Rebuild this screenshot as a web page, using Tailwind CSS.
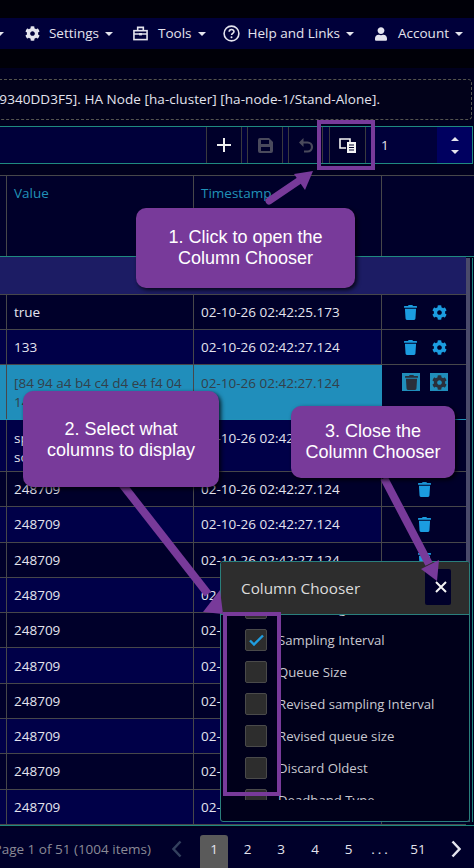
<!DOCTYPE html>
<html lang="en">
<head>
    <meta charset="UTF-8">
    <title>Column Chooser</title>
    <script src="https://cdn.jsdelivr.net/npm/@tailwindcss/browser@4"></script>
</head>
<body class="bg-black">
<svg class="hidden">
    <symbol id="gear" viewBox="0 0 512 512"><path fill="currentColor" d="M487.4 315.7l-42.6-24.6c4.3-23.2 4.3-47 0-70.2l42.6-24.6c4.9-2.8 7.1-8.6 5.5-14-11.1-35.6-30-67.8-54.7-94.6-3.8-4.1-10-5.1-14.8-2.3L380.8 110c-17.9-15.4-38.5-27.3-60.8-35.1V25.8c0-5.6-3.9-10.5-9.4-11.7-36.7-8.2-74.3-7.8-109.2 0-5.5 1.2-9.4 6.1-9.4 11.7V75c-22.2 7.9-42.8 19.8-60.8 35.1L88.7 85.5c-4.9-2.8-11-1.9-14.8 2.3-24.7 26.7-43.6 58.9-54.7 94.6-1.7 5.4.6 11.2 5.5 14L67.3 221c-4.3 23.2-4.3 47 0 70.2l-42.6 24.6c-4.9 2.8-7.1 8.6-5.5 14 11.1 35.6 30 67.8 54.7 94.6 3.8 4.1 10 5.1 14.8 2.3l42.6-24.6c17.9 15.4 38.5 27.3 60.8 35.1v49.2c0 5.6 3.9 10.5 9.4 11.7 36.7 8.2 74.3 7.8 109.2 0 5.5-1.2 9.4-6.1 9.4-11.7v-49.2c22.2-7.9 42.8-19.8 60.8-35.1l42.6 24.6c4.9 2.8 11 1.9 14.8-2.3 24.7-26.7 43.6-58.9 54.7-94.6 1.5-5.5-.7-11.3-5.6-14.1zM256 336c-44.1 0-80-35.9-80-80s35.9-80 80-80 80 35.9 80 80-35.9 80-80 80z"/></symbol>
    <symbol id="trash" viewBox="0 0 448 512"><path fill="currentColor" d="M432 32H312l-9.4-18.7A24 24 0 0 0 281.1 0H166.8a23.72 23.72 0 0 0-21.4 13.3L136 32H16A16 16 0 0 0 0 48v32a16 16 0 0 0 16 16h416a16 16 0 0 0 16-16V48a16 16 0 0 0-16-16zM53.2 467a48 48 0 0 0 47.9 45h245.8a48 48 0 0 0 47.9-45L416 128H32z"/></symbol>
</svg>
<div class="relative w-[474px] h-[868px] overflow-hidden bg-[#00001e] font-['Open_Sans',sans-serif] text-[13.5px] text-[#e4e4ee]">

    <!-- Top nav -->
    <div class="h-[18px] bg-[#000008]"></div>
    <div class="h-[31px] bg-[#00003a] flex items-center justify-end pr-[11px]">
        <span class="shrink-0 mr-[21px] w-0 h-0 border-x-[4px] border-x-transparent border-t-[4px] border-t-[#e4e4ee]"></span>
        <div class="flex items-center gap-[9px] mr-[20px] shrink-0">
            <svg class="w-[15px] h-[15px]"><use href="#gear"/></svg>
            <span class="flex items-center gap-[6px]">Settings <span class="w-0 h-0 border-x-[4px] border-x-transparent border-t-[4px] border-t-[#e4e4ee]"></span></span>
        </div>
        <div class="flex items-center gap-[10px] mr-[17px] shrink-0">
            <svg class="w-[15px] h-[15px]" viewBox="0 0 16 16" fill="none" stroke="#e4e4ee" stroke-width="1.7"><rect x="1" y="5" width="14" height="9.5"/><path d="M5 5V1.5h6V5M1 8.5h14"/><rect x="6.5" y="7.5" width="3" height="2.5" fill="#e4e4ee" stroke="none"/></svg>
            <span class="flex items-center gap-[6px]">Tools <span class="w-0 h-0 border-x-[4px] border-x-transparent border-t-[4px] border-t-[#e4e4ee]"></span></span>
        </div>
        <div class="flex items-center gap-[8px] mr-[21px] shrink-0">
            <svg class="w-[17px] h-[17px]" viewBox="0 0 17 17" fill="none" stroke="#e4e4ee"><circle cx="8.5" cy="8.5" r="7.4" stroke-width="1.6"/><path d="M6.2 6.8c0-3 4.8-3 4.8-.2 0 1.9-2.4 1.8-2.4 3.5" stroke-width="1.6"/><circle cx="8.5" cy="12.3" r="1" fill="#e4e4ee" stroke="none"/></svg>
            <span class="flex items-center gap-[6px]">Help and Links <span class="w-0 h-0 border-x-[4px] border-x-transparent border-t-[4px] border-t-[#e4e4ee]"></span></span>
        </div>
        <div class="flex items-center gap-[11px] shrink-0">
            <svg class="w-[12px] h-[14px]" viewBox="0 0 448 512" fill="#e4e4ee"><path d="M224 256c70.7 0 128-57.3 128-128S294.7 0 224 0 96 57.3 96 128s57.3 128 128 128zm89.6 32h-16.7c-22.2 10.2-46.9 16-72.9 16s-50.6-5.8-72.9-16h-16.7C60.2 288 0 348.2 0 422.4V464c0 26.5 21.5 48 48 48h352c26.5 0 48-21.5 48-48v-41.6c0-74.2-60.2-134.4-134.4-134.4z"/></svg>
            <span class="flex items-center gap-[6px]">Account <span class="w-0 h-0 border-x-[4px] border-x-transparent border-t-[4px] border-t-[#e4e4ee]"></span></span>
        </div>
    </div>
    <div class="h-[19px] bg-[#000008]"></div>

    <!-- Status message -->
    <div class="h-[11px]"></div>
    <div class="h-[41px] -ml-[10px] w-[482px] border border-dashed border-[#55554f] rounded-[4px] bg-[#02021a] flex items-center justify-end pr-[91px] whitespace-nowrap overflow-hidden tracking-[0.06px]">9340DD3F5]. HA Node [ha-cluster] [ha-node-1/Stand-Alone].</div>
    <div class="h-[6px]"></div>

    <!-- Toolbar -->
    <div class="h-[38px] w-[473px] border-y border-r border-[#1f8a80] bg-[#00003a] flex items-center justify-end">
        <div class="flex h-[36px] items-stretch">
            <div class="w-[36px] border-x border-[#3a3a3e] bg-[#00002a] flex items-center justify-center">
                <svg class="w-[16px] h-[16px]" viewBox="0 0 16 16"><path d="M8 1v14M1 8h14" stroke="#f0f0f0" stroke-width="2"/></svg>
            </div>
            <div class="w-[5px]"></div>
            <div class="w-[36px] border-x border-[#3a3a3e] bg-[#00002a] flex items-center justify-center">
                <svg class="w-[15px] h-[15px]" viewBox="0 0 15 15" fill="#4a4a5c"><path d="M2 0h9l4 4v9a2 2 0 0 1-2 2H2a2 2 0 0 1-2-2V2a2 2 0 0 1 2-2zM3 2v4h8V2zM3 9v4h9V9z" fill-rule="evenodd"/></svg>
            </div>
            <div class="w-[5px]"></div>
            <div class="w-[35px] border-x border-[#3a3a3e] bg-[#00002a] flex items-center justify-center">
                <svg class="w-[16px] h-[16px]" viewBox="0 0 16 16" fill="none"><path d="M4 5.5h5.5a4.5 4.5 0 0 1 0 9H6" stroke="#4a4a5c" stroke-width="2.2"/><path d="M1 5.5L5.5 1v9z" fill="#4a4a5c"/></svg>
            </div>
            <div class="w-[6px]"></div>
            <div class="w-[37px] border-x border-[#3a3a3e] bg-[#00002a] flex items-center justify-center">
                <svg class="w-[17px] h-[15px]" viewBox="0 0 17 15" fill="none"><path d="M7 10H1V1h10v3" stroke="#f4f4f4" stroke-width="1.6"/><rect x="8" y="4" width="9" height="11" fill="#f4f4f4"/><path d="M10 7h5M10 9.5h5M10 12h5" stroke="#00002a"/></svg>
            </div>
        </div>
        <div class="w-[71px] h-[36px] pl-[15px] flex items-center">1</div>
        <div class="w-[35px] h-[36px] bg-[#000060] flex flex-col items-center justify-center gap-[9px]">
            <span class="w-0 h-0 border-x-[4px] border-x-transparent border-b-[4px] border-b-[#e4e4ee]"></span>
            <span class="w-0 h-0 border-x-[4px] border-x-transparent border-t-[4px] border-t-[#e4e4ee]"></span>
        </div>
    </div>

    <!-- Table -->
    <div class="h-[11px]"></div>
    <div class="h-[82px] border-y border-[#47474a] border-b-[#1f8a80] bg-[#00002a] grid grid-cols-[7px_187px_188px_1fr] text-[#2092b8]">
        <div class="border-r border-[#47474a]"></div>
        <div class="border-r border-[#47474a] pl-[7px] pt-[7px]">Value</div>
        <div class="border-r border-[#47474a] pl-[7px] pt-[7px]">Timestamp</div>
        <div></div>
    </div>
    <div class="h-[38px] w-[466px] bg-[#1c1c64] border-b border-[#47474a]"></div>

    <div class="w-[466px]">
        <div class="h-[35px] grid grid-cols-[7px_187px_188px_1fr] bg-[#00002a] border-b border-[#47474a]">
            <div class="border-r border-[#47474a]"></div>
            <div class="border-r border-[#47474a] pl-[7px] flex items-center">true</div>
            <div class="border-r border-[#47474a] pl-[7px] flex items-center">02-10-26 02:42:25.173</div>
            <div class="flex items-center justify-center gap-[15px] pl-[2px] text-[#1b9ce0]">
                <svg class="w-[13px] h-[15px]"><use href="#trash"/></svg>
                <svg class="w-[15px] h-[15px]"><use href="#gear"/></svg>
            </div>
        </div>
        <div class="h-[35px] grid grid-cols-[7px_187px_188px_1fr] bg-[#000048] border-b border-[#47474a]">
            <div class="border-r border-[#47474a]"></div>
            <div class="border-r border-[#47474a] pl-[7px] flex items-center">133</div>
            <div class="border-r border-[#47474a] pl-[7px] flex items-center">02-10-26 02:42:27.124</div>
            <div class="flex items-center justify-center gap-[15px] pl-[2px] bg-[#00002a] text-[#1b9ce0]">
                <svg class="w-[13px] h-[15px]"><use href="#trash"/></svg>
                <svg class="w-[15px] h-[15px]"><use href="#gear"/></svg>
            </div>
        </div>
        <!-- selected row -->
        <div class="h-[55px] grid grid-cols-[7px_187px_188px_1fr] border-b border-[#2092b8]">
            <div class="bg-[#208ebb] border-r border-[#47474a]"></div>
            <div class="bg-[#208ebb] border-r border-[#47474a] pl-[7px] pr-[6px] pt-[9px] text-[#33404a] leading-[19px] break-words">[84 94 a4 b4 c4 d4 e4 f4 04 14</div>
            <div class="bg-[#208ebb] pl-[7px] pt-[9px] text-[#33404a] leading-[19px]">02-10-26 02:42:27.124</div>
            <div class="bg-[#00002a] flex justify-center gap-[10px] pt-[8px] pl-[2px] text-[#2a2f3a]">
                <span class="w-[18px] h-[18px] bg-[#208ebb] flex items-center justify-center">
                    <svg class="w-[13px] h-[15px]"><use href="#trash"/></svg>
                </span>
                <span class="w-[18px] h-[18px] bg-[#208ebb] flex items-center justify-center">
                    <svg class="w-[15px] h-[15px]"><use href="#gear"/></svg>
                </span>
            </div>
        </div>
        <div class="h-[52px] grid grid-cols-[7px_187px_188px_1fr] bg-[#000048] border-b border-[#47474a]">
            <div class="border-r border-[#47474a]"></div>
            <div class="border-r border-[#47474a] pl-[7px] pt-[9px] leading-[19px]">sp<br>so</div>
            <div class="border-r border-[#47474a] pl-[7px] pt-[9px] leading-[19px]">02-10-26 02:42:27.124</div>
            <div class="bg-[#00002a]"></div>
        </div>
        <div id="rows"></div>
    </div>

    <!-- Grid bottom edge + pager -->
    <div class="h-[3px] border-t border-[#1f8a80]"></div>
    <div class="h-[43px] bg-[#00002a] flex items-center whitespace-nowrap">
        <span class="w-[151px] shrink-0 text-[#8a8a96] overflow-hidden flex justify-end">Page 1 of 51 (1004 items)</span>
        <svg class="w-[10px] h-[18px] ml-[21px]" viewBox="0 0 10 18" fill="none" stroke="#33405e" stroke-width="2.5"><path d="M8.5 1.5L1.5 9l7 7.5"/></svg>
        <div class="flex items-center ml-[18px]">
            <span class="w-[28px] h-[36px] mt-[7px] bg-[#5a5a5a] rounded-t-[3px] flex items-center justify-center pb-[7px]">1</span>
            <span class="w-[33px] text-center ml-[3px]">2</span>
            <span class="w-[34px] text-center">3</span>
            <span class="w-[34px] text-center">4</span>
            <span class="w-[33px] text-center">5</span>
            <span class="w-[32px] text-center tracking-[3px]">...</span>
            <span class="w-[42px] text-center">51</span>
        </div>
        <svg class="w-[10px] h-[18px] ml-[12px]" viewBox="0 0 10 18" fill="none" stroke="#e4e4ee" stroke-width="2.5"><path d="M1.5 1.5L8.5 9l-7 7.5"/></svg>
    </div>

    <!-- Scrollbar and right edge of the grid -->
    <div class="absolute left-[466px] top-[258px] w-[7px] h-[564px] border-r border-[#1f8a80]">
        <div class="w-[4px] h-full bg-[#4a4a6a]"></div>
    </div>

    <!-- Column Chooser popup -->
    <div class="absolute left-[220px] top-[561px] w-[250px] h-[261px] border border-[#2a7f7c] rounded-[3px] bg-[#00001a] flex flex-col overflow-hidden">
        <div class="h-[53px] shrink-0 bg-[#2d2d2d] border-b border-[#2a7f7c] flex items-center pl-[20px] text-[15.3px] text-[#dcdcdc]">Column Chooser</div>
        <div class="h-[185px] overflow-hidden text-[13.2px] text-[#c8c8d0]">
            <div class="-mt-[22px]">
                <div class="h-[32px] flex items-center pl-[24px] gap-[11px]"><span class="mb-[2px] w-[22px] h-[22px] rounded-[2px] border border-[#4a4a4a] bg-[#2d2d2d]"></span>Monitoring</div>
                <div class="h-[32px] flex items-center pl-[24px] gap-[11px]"><span class="mb-[2px] w-[22px] h-[22px] rounded-[2px] border border-[#4a4a4a] bg-[#2d2d2d] flex items-center justify-center"><svg class="w-[15px] h-[12px]" viewBox="0 0 15 12" fill="none" stroke="#1f9de0" stroke-width="2.4"><path d="M1 6.5l4 4L14 1.5"/></svg></span>Sampling Interval</div>
                <div class="h-[32px] flex items-center pl-[24px] gap-[11px]"><span class="mb-[2px] w-[22px] h-[22px] rounded-[2px] border border-[#4a4a4a] bg-[#2d2d2d]"></span>Queue Size</div>
                <div class="h-[32px] flex items-center pl-[24px] gap-[11px]"><span class="mb-[2px] w-[22px] h-[22px] rounded-[2px] border border-[#4a4a4a] bg-[#2d2d2d]"></span>Revised sampling Interval</div>
                <div class="h-[32px] flex items-center pl-[24px] gap-[11px]"><span class="mb-[2px] w-[22px] h-[22px] rounded-[2px] border border-[#4a4a4a] bg-[#2d2d2d]"></span>Revised queue size</div>
                <div class="h-[32px] flex items-center pl-[24px] gap-[11px]"><span class="mb-[2px] w-[22px] h-[22px] rounded-[2px] border border-[#4a4a4a] bg-[#2d2d2d]"></span>Discard Oldest</div>
                <div class="h-[32px] flex items-center pl-[24px] gap-[11px]"><span class="mb-[2px] w-[22px] h-[22px] rounded-[2px] border border-[#4a4a4a] bg-[#2d2d2d]"></span>Deadband Type</div>
            </div>
        </div>
    </div>
    <div class="absolute left-[425px] top-[569px] w-[26px] h-[36px] bg-[#00002a] rounded-[2px] flex items-center justify-center">
        <svg class="w-[12px] h-[12px] ml-[6px]" viewBox="0 0 12 12" stroke="#f4f4f4" stroke-width="2"><path d="M1 1l10 10M11 1L1 11"/></svg>
    </div>

    <!-- Highlight boxes -->
    <div class="absolute left-[317px] top-[120px] w-[58px] h-[50px] border-[4px] border-[#783a9a]"></div>
    <div class="absolute left-[223px] top-[612px] w-[58px] h-[184px] border-[4px] border-[#783a9a]"></div>

    <!-- Arrows -->
    <svg class="absolute left-0 top-0 w-[474px] h-[868px] pointer-events-none" viewBox="0 0 474 868" fill="none" stroke="#783a9a">
        <path d="M269 201L300 180" stroke-width="7" stroke-linecap="round"/>
        <path d="M313 171L294 174L305 190Z" fill="#783a9a" stroke="none"/>
        <path d="M122 484L208 594" stroke-width="8"/>
        <path d="M223 614L203 612L220 590Z" fill="#783a9a" stroke="none"/>
        <path d="M384 478L429 564" stroke-width="8"/>
        <path d="M437 581L421 569L439 560Z" fill="#783a9a" stroke="none"/>
    </svg>

    <!-- Callouts -->
    <div class="absolute left-[136px] top-[208px] w-[219px] h-[80px] rounded-[10px] bg-[#783a9a] shadow-[2px_2px_4px_rgba(0,0,0,0.8)] flex items-center justify-center text-center font-['Liberation_Sans',sans-serif] text-[18px] leading-[21px] text-white">1. Click to open the<br>Column Chooser</div>
    <div class="absolute left-[23px] top-[391px] w-[196px] h-[96px] rounded-[10px] bg-[#783a9a] shadow-[2px_2px_4px_rgba(0,0,0,0.8)] flex justify-center text-center pt-[28px] font-['Liberation_Sans',sans-serif] text-[18px] leading-[21px] text-white">2. Select what<br>columns to display</div>
    <div class="absolute left-[291px] top-[406px] w-[164px] h-[72px] rounded-[10px] bg-[#783a9a] shadow-[2px_2px_4px_rgba(0,0,0,0.8)] flex items-center justify-center text-center font-['Liberation_Sans',sans-serif] text-[18px] leading-[21px] text-white">3. Close the<br>Column Chooser</div>
</div>

<script>
    // plain repeated rows under the tall one
    const rows = document.getElementById('rows');
    for (let i = 0; i < 10; i++) {
        const bg = i % 2 ? 'bg-[#000048]' : 'bg-[#00002a]';
        rows.innerHTML += `<div class="h-[35.3px] grid grid-cols-[7px_187px_188px_1fr] ${bg} border-b border-[#47474a]">
            <div class="border-r border-[#47474a]"></div>
            <div class="border-r border-[#47474a] pl-[7px] flex items-center">248709</div>
            <div class="border-r border-[#47474a] pl-[7px] flex items-center">02-10-26 02:42:27.124</div>
            <div class="bg-[#00002a] flex items-center justify-center text-[#1b9ce0]"><svg class="w-[13px] h-[15px]"><use href="#trash"/></svg></div>
        </div>`;
    }
</script>
</body>
</html>
